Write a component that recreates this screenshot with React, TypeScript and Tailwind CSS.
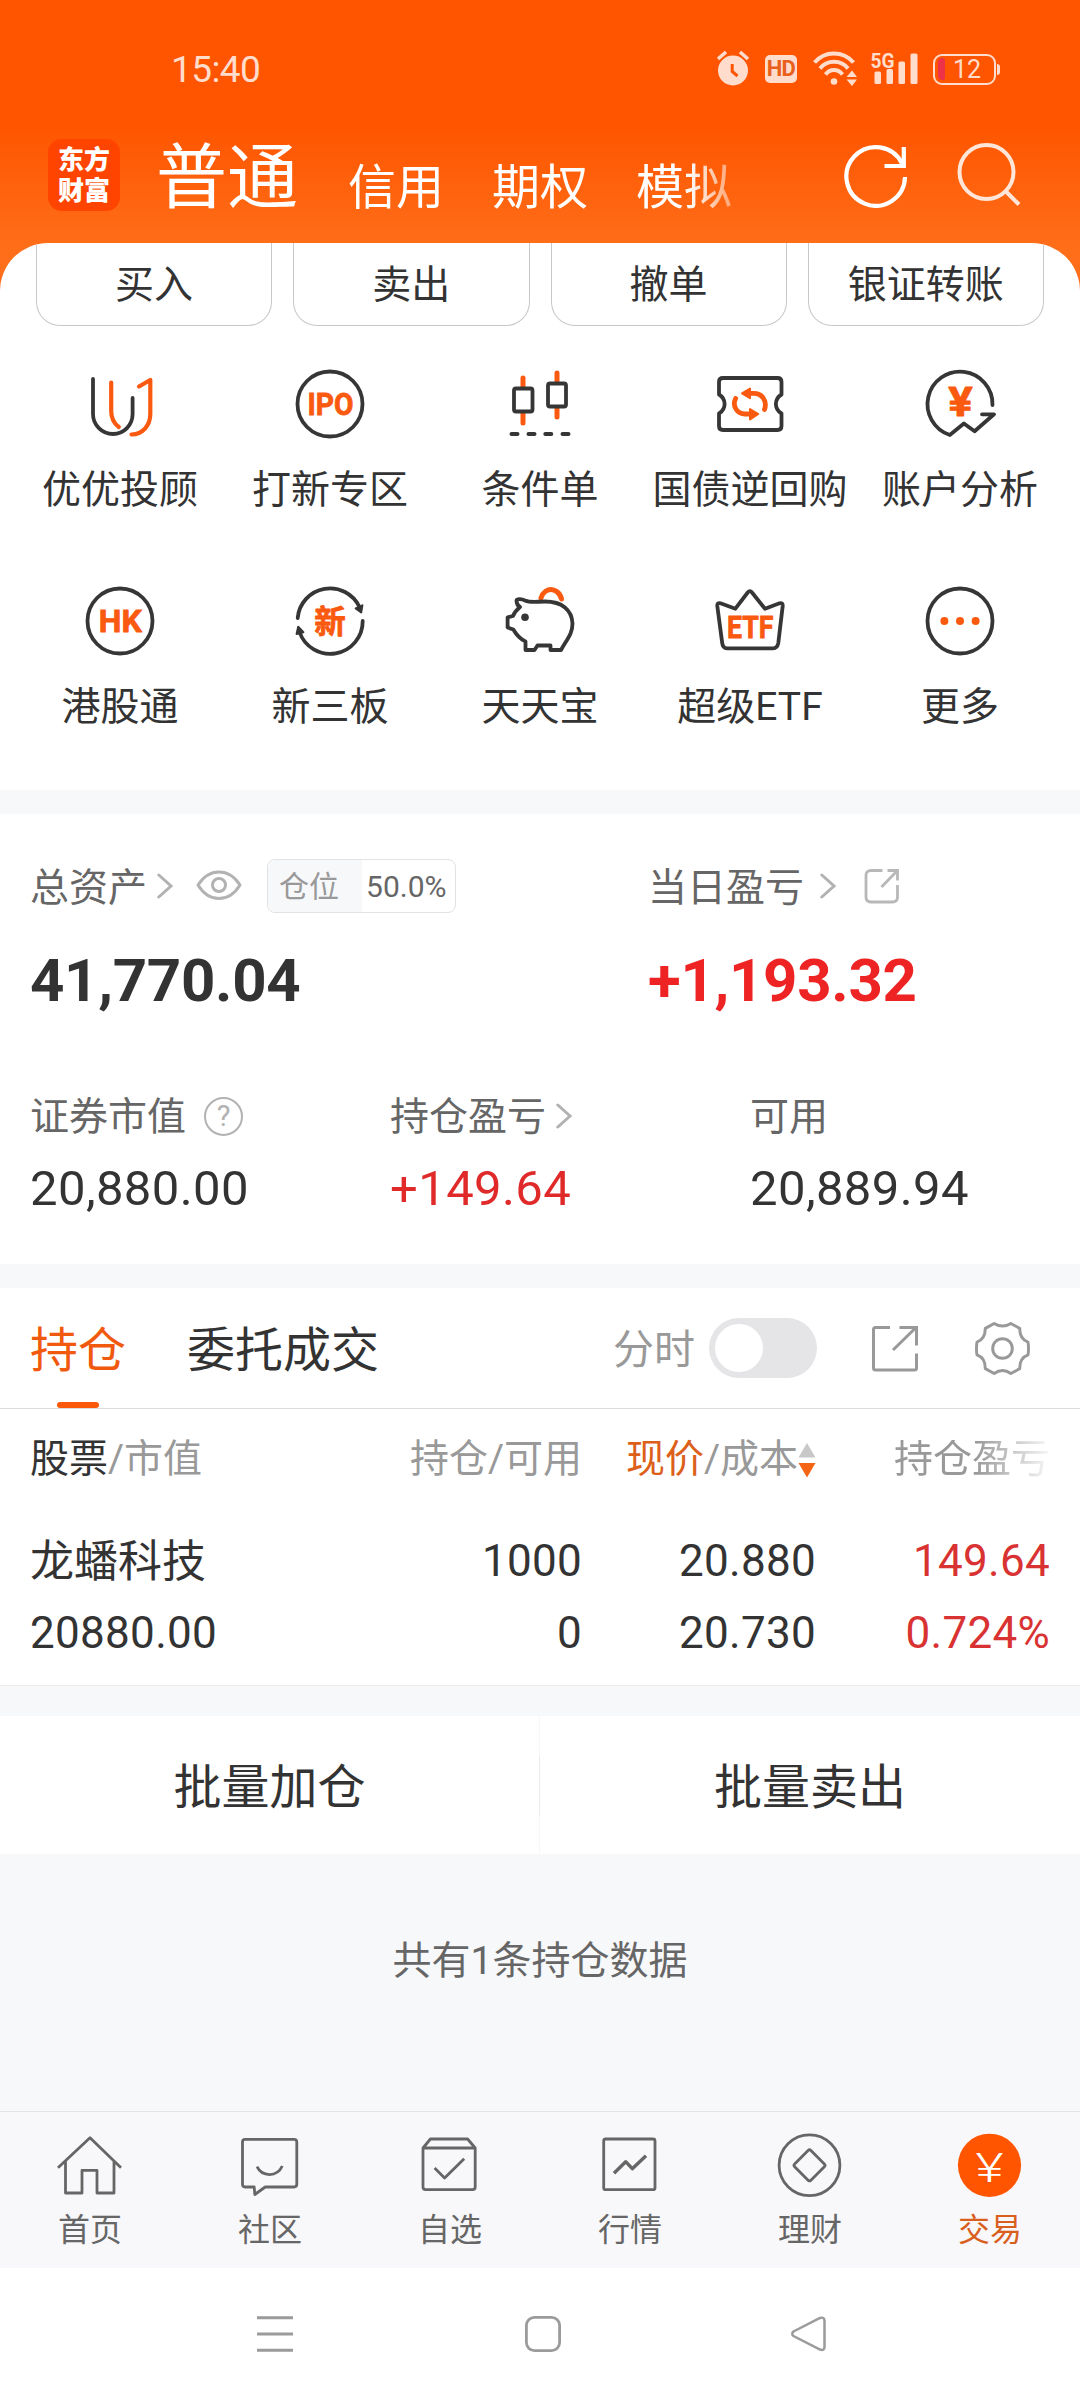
import type { ReactNode } from "react";

type IconProps = { children: ReactNode };

const DARK = "#363636";
const ORANGE = "#fa5a0f";

function ShortcutIcon({ children }: IconProps) {
  return (
    <svg
      className="h-20 w-20"
      viewBox="0 0 80 80"
      fill="none"
      stroke={DARK}
      strokeWidth="3.8"
      strokeLinecap="round"
      strokeLinejoin="round"
    >
      {children}
    </svg>
  );
}

function IconLabel({ text, x, y, width, size }: { text: string; x: number; y: number; width: number; size: number }) {
  return (
    <text
      x={x}
      y={y}
      fontSize={size}
      textLength={width}
      lengthAdjust="spacingAndGlyphs"
      fill={ORANGE}
      stroke={ORANGE}
      strokeWidth="0.8"
      className="font-['Roboto','Noto_Sans_CJK_SC',sans-serif] font-bold"
    >
      {text}
    </text>
  );
}

const shortcuts: { label: string; icon: ReactNode }[] = [
  {
    label: "优优投顾",
    icon: (
      <>
        <path d="M13 15V50C13 61 22 70 33 70S52.6 61 52.6 50V34" />
        <path d="M31.2 18.5V47C31.2 54 34 59.5 38.8 63" stroke={ORANGE} strokeWidth="4.2" />
        <path d="M59 22.5L70.3 16V50C70.3 61 63 70.3 51.5 70.5" stroke={ORANGE} strokeWidth="4.2" />
      </>
    ),
  },
  {
    label: "打新专区",
    icon: (
      <>
        <circle cx="40" cy="40" r="32.5" />
        <IconLabel text="IPO" x={17.5} y={51.3} width={46} size={31.5} />
      </>
    ),
  },
  {
    label: "条件单",
    icon: (
      <>
        <path d="M23 14V22M23 50V59M57 9V17M57 45V53" stroke={ORANGE} strokeWidth="5" />
        <rect x="14" y="24.5" width="18.5" height="23" rx="2" />
        <rect x="48" y="19.5" width="18" height="23" rx="2" />
        <path d="M11.5 70H17.5M28.5 70H34.5M45.3 70H51.3M62.5 70H68.5" strokeWidth="4" />
      </>
    ),
  },
  {
    label: "国债逆回购",
    icon: (
      <>
        <path d="M13 14H67.5Q71.5 14 71.5 18V30.5C64 35 64 45 71.5 49.5V62Q71.5 66 67.5 66H13Q9 66 9 62V49.5C16.5 45 16.5 35 9 30.5V18Q9 14 13 14Z" />
        <path d="M38 29.3H44C52 29.3 57.5 37 54.5 45.5M25.6 34.5C22 42 27 50 35 50H41" stroke={ORANGE} strokeWidth="4.8" />
        <path d="M32 29.3L40 24.5V34.2ZM48.3 50L40 45V55.5Z" fill={ORANGE} stroke={ORANGE} strokeWidth="2" />
      </>
    ),
  },
  {
    label: "账户分析",
    icon: (
      <>
        <path d="M72.5 41A32.5 32.5 0 1 0 29.8 71L43.9 59.5L54.6 67.3L74 50.3H62" />
        <IconLabel text="¥" x={28.2} y={52} width={24.5} size={41} />
      </>
    ),
  },
  {
    label: "港股通",
    icon: (
      <>
        <circle cx="40" cy="40" r="32.5" />
        <IconLabel text="HK" x={18.8} y={51.3} width={43} size={31.5} />
      </>
    ),
  },
  {
    label: "新三板",
    icon: (
      <>
        <path d="M7.7 37A32.5 32.5 0 0 1 69.5 26M72.7 40A32.5 32.5 0 0 1 9.5 51" />
        <path d="M72.4 24.3L65.7 27.5L71.2 31.5ZM8.2 45.7L6.6 53L13.4 51.2Z" fill={DARK} strokeWidth="2" />
        <IconLabel text="新" x={24.3} y={51.8} width={31.5} size={31.5} />
      </>
    ),
  },
  {
    label: "天天宝",
    icon: (
      <>
        <path d="M41 17C43 10.5 48 8.5 51 8.5S60 11 61.5 18" stroke={ORANGE} strokeWidth="5" />
        <path d="M16.5 19.5C17 17.5 22 18 25 19.5C31 22 37 20.5 45 20.5C62 20.5 72 29 72.5 42.5C72.5 53 67 58 61 69H50.5V64.5H37.5L34.5 69H25.5V60.5C19 57.5 16.5 54 13.3 48.5L7.6 46.5V36.3L13 35C14.5 31 16.5 29 20 26C17 24.5 16.5 22 16.5 19.5Z" />
        <circle cx="25" cy="36.3" r="3.8" fill={DARK} stroke="none" />
      </>
    ),
  },
  {
    label: "超级ETF",
    icon: (
      <>
        <path d="M25.4 27.7L37.7 11.5Q39.8 8.6 42 11.5L55 27.7L69.5 22.3Q73 21.5 72.7 25L68.3 62Q67.5 67.3 63 67.3H17Q12.8 67.3 12.2 62L7.3 25Q7 21.5 10.5 22.3Z" />
        <IconLabel text="ETF" x={17} y={57.3} width={46.5} size={31.5} />
      </>
    ),
  },
  {
    label: "更多",
    icon: (
      <>
        <circle cx="40" cy="40" r="32.5" />
        <g fill={ORANGE} stroke="none">
          <circle cx="24.4" cy="40" r="4" />
          <circle cx="40" cy="40" r="4" />
          <circle cx="55.6" cy="40" r="4" />
        </g>
      </>
    ),
  },
];

const navItems: { label: string; active?: boolean; icon: ReactNode }[] = [
  {
    label: "首页",
    icon: (
      <path d="M8 42.7L40 12.8L71 42.7M15.5 36V68H32V45.3H47V68H64V36" />
    ),
  },
  {
    label: "社区",
    icon: (
      <>
        <path d="M15 14.3H64Q66.8 14.3 66.8 17V59.3Q66.8 62 64 62H35.2L24.8 69.5L24.2 62H15Q12.5 62 12.5 59.3V17Q12.5 14.3 15 14.3Z" />
        <path d="M27 41.7C32 52 47 52.5 52.3 41" />
      </>
    ),
  },
  {
    label: "自选",
    icon: (
      <path d="M13 23L20.4 14H57.6L65.2 23V62Q65.2 64.7 62.5 64.7H15.7Q13 64.7 13 62ZM13 23H65.2M24.6 43L34.6 53L54.2 33.7" />
    ),
  },
  {
    label: "行情",
    icon: (
      <>
        <rect x="13.7" y="14" width="51.3" height="50.7" rx="2" />
        <path d="M24 48.3L35.7 36.7L42.3 43.7L56 30.7" strokeWidth="3.4" />
      </>
    ),
  },
  {
    label: "理财",
    icon: (
      <>
        <circle cx="39.5" cy="40.3" r="30.4" />
        <rect x="28" y="28.8" width="23" height="23" rx="2" transform="rotate(45 39.5 40.3)" />
      </>
    ),
  },
  {
    label: "交易",
    active: true,
    icon: (
      <>
        <circle cx="39.5" cy="40.3" r="31.6" fill="#ff5500" stroke="none" />
        <text
          x="25.5"
          y="56.5"
          fontSize="41"
          textLength="28"
          lengthAdjust="spacingAndGlyphs"
          fill="#fff"
          stroke="none"
          className="font-['Roboto',sans-serif] font-light"
        >
          ¥
        </text>
      </>
    ),
  },
];

const actions = ["买入", "卖出", "撤单", "银证转账"];

function Chevron() {
  return (
    <svg className="h-[26px] w-4" viewBox="0 0 16 26" fill="none" stroke="#b2b2b2" strokeWidth="3" strokeLinecap="round">
      <path d="M1.8 2L14 13L1.8 24" />
    </svg>
  );
}

function StatusIcons() {
  return (
    <div className="flex items-center text-[#ffdccb]">
      <svg className="h-9 w-8" viewBox="0 0 32 36" fill="currentColor">
        <circle cx="16" cy="19.5" r="15" />
        <path d="M1 8L9 1M31 8L23 1" stroke="currentColor" strokeWidth="3.5" />
        <path d="M15.2 13V20.5L20.5 25" stroke="#ff5500" strokeWidth="3" fill="none" />
      </svg>
      <div className="ml-4 flex h-7 w-8 items-center justify-center rounded-[5px] bg-[#ffdccb] text-[22px] leading-none font-bold tracking-tight text-[#e8601c]">
        HD
      </div>
      <svg className="ml-4 h-9 w-11" viewBox="0 0 44 36" fill="none" stroke="currentColor" strokeWidth="4">
        <path d="M1.5 11.5C12 -0.5 30 -0.5 40.5 11.5M7 17.5C14 8.5 28 8.5 35 17.5M12.5 23.5C17 17.5 25 17.5 29.5 23.5" />
        <circle cx="21" cy="30.5" r="3.3" fill="currentColor" stroke="none" />
        <path d="M33.5 26L39 19.5L44 26ZM33.5 28.5L39 35L44 28.5Z" fill="currentColor" stroke="none" />
      </svg>
      <svg className="ml-3 h-10 w-[50px]" viewBox="-2 -2 50 40" fill="currentColor">
        <text x="-0.5" y="16.5" fontSize="20" textLength="24" lengthAdjust="spacingAndGlyphs" className="font-['Roboto',sans-serif] font-bold">
          5G
        </text>
        <rect x="3.5" y="20.5" width="6.5" height="12.5" rx="1.5" />
        <rect x="15.5" y="18" width="6.5" height="15" rx="1.5" />
        <rect x="27.5" y="10.5" width="6.5" height="22.5" rx="1.5" />
        <rect x="39.5" y="2.5" width="7" height="30.5" rx="1.5" />
      </svg>
      <div className="ml-3.5 flex h-[31px] w-[63px] items-center rounded-[9px] border-[2.5px] border-current px-[3px]">
        <span className="h-[22px] w-[7px] rounded-l-[5px] rounded-r-[3px] bg-[#ee3248]" />
        <span className="ml-2 text-[25px] leading-none">12</span>
      </div>
      <span className="ml-px h-[11px] w-[3px] rounded-r bg-current" />
    </div>
  );
}

function Header() {
  return (
    <header className="h-[243px] text-white">
      <div className="flex h-[138px] items-center justify-between pr-20 pl-[171px]">
        <span className="text-[37px] leading-none tracking-[-0.6px] text-[#ffdccb]">15:40</span>
        <StatusIcons />
      </div>
      <div className="mt-px flex items-start">
        <div className="ml-12 flex h-[72px] w-[72px] flex-col items-center justify-center rounded-[14px] bg-[#ff4400] pt-0.5 text-[26px] leading-[31px] font-black">
          <span>东方</span>
          <span>财富</span>
        </div>
        <span className="ml-9 text-[71px] leading-[77px]">普通</span>
        <nav className="mt-[13px] ml-[50px] flex gap-12 text-[48px] leading-[72px] [mask-image:linear-gradient(to_right,#000_340px,transparent_415px)]">
          <span>信用</span>
          <span>期权</span>
          <span>模拟</span>
        </nav>
        <svg className="mt-[3px] ml-[111px] h-[66px] w-[66px]" viewBox="0 0 66 66" fill="none" stroke="#fff" strokeWidth="4.2">
          <path d="M62 35A29.3 29.3 0 1 1 59 21.5" />
          <path d="M60.8 5V24H41.5" />
        </svg>
        <svg className="mt-1 ml-[46px] h-[68px] w-[66px]" viewBox="0 0 66 68" fill="none" stroke="#ffe6d8" strokeWidth="4">
          <circle cx="31.5" cy="29" r="27" />
          <path d="M50 47.5L64 61.5" />
        </svg>
      </div>
    </header>
  );
}

function Shortcuts() {
  return (
    <section className="h-[547px] shrink-0 overflow-hidden rounded-t-[48px] bg-white">
      <div className="flex gap-[21px] px-9">
        {actions.map((label) => (
          <button
            key={label}
            className="h-[83px] flex-1 rounded-b-3xl border-x border-b border-[#c8c8c8] pt-0.5 text-[39px] leading-none"
          >
            {label}
          </button>
        ))}
      </div>
      <div className="mt-[38px] grid grid-cols-5 gap-y-[67px] px-[15px]">
        {shortcuts.map((item) => (
          <div key={item.label} className="flex flex-col items-center">
            <ShortcutIcon>{item.icon}</ShortcutIcon>
            <span className="mt-[23px] text-[39px] leading-[47px] whitespace-nowrap">{item.label}</span>
          </div>
        ))}
      </div>
    </section>
  );
}

function Summary() {
  return (
    <section className="mt-6 h-[450px] shrink-0 bg-white px-[30px] pt-[45px]">
      <div className="grid grid-cols-[618px_1fr]">
        <div>
          <div className="flex h-[54px] items-center text-[39px] leading-none text-[#666]">
            <span className="pt-1">总资产</span>
            <span className="ml-2.5">
              <Chevron />
            </span>
            <svg className="ml-[23px] h-8 w-[46px]" viewBox="0 0 46 32" fill="none" stroke="#b2b2b2" strokeWidth="3">
              <path d="M2 15C13 -2.5 33 -2.5 44 15C33 33 13 33 2 15Z" strokeLinejoin="round" />
              <circle cx="23" cy="15" r="6.5" />
            </svg>
            <div className="ml-[25px] flex h-[54px] items-stretch overflow-hidden rounded-lg border border-[#e2e2e2] text-[30px]">
              <span className="flex w-[94px] items-center bg-[#f7f8fa] pt-px pl-[11px] text-[#999]">仓位</span>
              <span className="flex w-[93px] items-center pt-px pl-1">50.0%</span>
            </div>
          </div>
          <div className="mt-[37px] text-[60px] leading-[62px] font-bold tracking-[-0.3px]">41,770.04</div>
        </div>
        <div>
          <div className="flex h-[54px] items-center text-[39px] leading-none text-[#666]">
            <span className="pt-1">当日盈亏</span>
            <span className="ml-4">
              <Chevron />
            </span>
            <svg className="ml-7 h-9 w-9" viewBox="0 0 36 36" fill="none" stroke="#b8b8b8" strokeWidth="2.8">
              <path d="M18.5 2.5H7Q2 2.5 2 7.5V29Q2 34 7 34H28.5Q33.5 34 33.5 29V17M17.5 19L33 3M23.5 2.5H33.5V12.5" />
            </svg>
          </div>
          <div className="mt-[37px] text-[60px] leading-[62px] font-bold tracking-[-0.3px] text-[#ee2424]">+1,193.32</div>
        </div>
      </div>
      <div className="mt-[77px] grid grid-cols-[360px_360px_1fr] text-[49px] leading-[52px] tracking-[0.4px]">
        <div>
          <div className="mb-5 flex h-[54px] items-center text-[39px] tracking-normal text-[#666]">
            <span className="pt-0.5">证券市值</span>
            <span className="ml-[18px] flex h-[39px] w-[39px] items-center justify-center rounded-full border-[2.5px] border-[#b2b2b2] text-[29px] leading-none text-[#b2b2b2]">
              ?
            </span>
          </div>
          20,880.00
        </div>
        <div>
          <div className="mb-5 flex h-[54px] items-center text-[39px] tracking-normal text-[#666]">
            <span className="pt-0.5">持仓盈亏</span>
            <span className="ml-2.5">
              <Chevron />
            </span>
          </div>
          <span className="text-[#e02a2a]">+149.64</span>
        </div>
        <div>
          <div className="mb-5 flex h-[54px] items-center pt-0.5 text-[39px] tracking-normal text-[#666]">可用</div>
          20,889.94
        </div>
      </div>
    </section>
  );
}

function Positions() {
  return (
    <section className="mt-6 h-[398px] shrink-0 border-b border-[#ececec] bg-white">
      <div className="flex h-[121px] items-center border-b border-[#dcdcdc] pr-[50px] pl-[30px] text-[48px] leading-none">
        <div className="relative flex h-full items-center pt-[5px] text-[#f0590e]">
          持仓
          <span className="absolute bottom-0 left-[27px] h-1.5 w-[42px] rounded-full bg-[#fa5a0a]" />
        </div>
        <span className="ml-[61px] pt-[5px]">委托成交</span>
        <span className="ml-auto pt-1 text-[41px] text-[#999]">分时</span>
        <span className="ml-3.5 flex h-[60px] w-[108px] items-center rounded-full bg-[#e5e5e7] pl-1.5">
          <span className="h-12 w-12 rounded-full bg-white" />
        </span>
        <svg className="ml-[54px] h-12 w-12" viewBox="0 0 48 48" fill="none" stroke="#999" strokeWidth="3">
          <path d="M19 3.5H4.5Q2.5 3.5 2.5 5.5V44Q2.5 46 4.5 46H43.5Q45.5 46 45.5 44V29.5M22 26L44.5 4M28.5 3.5H45.5V21.5" />
        </svg>
        <svg className="ml-14 h-[55px] w-[55px]" viewBox="0 0 56 56" fill="none" stroke="#999" strokeWidth="3" strokeLinejoin="round">
          <path d="M19.5 2.5C25 6 31 6 36.5 2.5L45.5 7.5C45.5 15 48 19.5 54 21.5Q55 28 54 34.5C48 36.5 45.5 41 45.5 48.5L36.5 53.5C31 49.5 25 49.5 19.5 53.5L10.5 48.5C10.5 41 8 36.5 2 34.5Q1 28 2 21.5C8 19.5 10.5 15 10.5 7.5Z" />
          <circle cx="28" cy="28" r="10" />
        </svg>
      </div>
      <div className="grid h-[101px] grid-cols-[350px_202px_234px_234px] items-center pl-[30px] text-[39px] leading-none text-[#999]">
        <div>
          <span className="text-[#333]">股票</span>/市值
        </div>
        <div className="text-right">持仓/可用</div>
        <div className="flex items-center justify-end">
          <span className="text-[#dc5f1a]">现价</span>/成本
          <svg className="h-9 w-[18px]" viewBox="0 0 18 36">
            <path d="M9 1L17.5 15.5H0.5Z" fill="#c8c8c8" />
            <path d="M0.5 21H17.5L9 35.5Z" fill="#f56414" />
          </svg>
        </div>
        <div className="text-right [mask-image:linear-gradient(to_right,#000_160px,transparent_240px)]">持仓盈亏</div>
      </div>
      <div className="grid grid-cols-[350px_202px_234px_234px] pt-[15px] pl-[30px] text-right text-[44px] leading-[72px] tracking-[0.3px]">
        <div className="pt-px text-left tracking-normal">龙蟠科技</div>
        <div>1000</div>
        <div>20.880</div>
        <div className="text-[#d93232]">149.64</div>
        <div className="-mt-px text-left">20880.00</div>
        <div className="-mt-px">0</div>
        <div className="-mt-px">20.730</div>
        <div className="-mt-px text-[#d93232]">0.724%</div>
      </div>
    </section>
  );
}

export default function App() {
  return (
    <div className="flex h-[2400px] w-[1080px] flex-col overflow-hidden bg-[#f7f8fa] font-['Roboto','Noto_Sans_CJK_SC',sans-serif] text-[#333]">
      <div className="bg-[linear-gradient(#ff5500_125px,#ff6d18_243px,#ff701c_300px)]">
        <Header />
        <Shortcuts />
      </div>
      <Summary />
      <Positions />
      <div className="mt-[30px] flex h-[138px] shrink-0 items-center bg-white text-[48px] leading-none">
        <button className="w-[539px] pt-[5px]">批量加仓</button>
        <span className="h-full w-px bg-[linear-gradient(#f7f7f7_39px,#ebebeb_39px_99px,#f7f7f7_99px)]" />
        <button className="flex-1 pt-[5px]">批量卖出</button>
      </div>
      <p className="mt-[82px] text-center text-[39px] leading-[50px] text-[#666]">共有1条持仓数据</p>
      <nav className="mt-auto grid h-[157px] shrink-0 grid-cols-6 border-t border-[#e4e4e6] bg-[#f8f8fa]">
        {navItems.map((item) => (
          <div key={item.label} className="flex flex-col items-center pt-[13px]">
            <svg
              className="h-20 w-20"
              viewBox="0 0 80 80"
              fill="none"
              stroke="#666"
              strokeWidth="2.8"
              strokeLinejoin="round"
            >
              {item.icon}
            </svg>
            <span className={item.active ? "mt-[5px] text-[32px] leading-10 text-[#d95f1e]" : "mt-[5px] text-[32px] leading-10 text-[#666]"}>
              {item.label}
            </span>
          </div>
        ))}
      </nav>
      <div className="flex h-[132px] shrink-0 items-center bg-white pl-[257px]">
        <svg className="h-9 w-9" viewBox="0 0 36 36" stroke="#9b9b9b" strokeWidth="3">
          <path d="M0 1.8H36M0 18H36M0 34.2H36" />
        </svg>
        <svg className="ml-[232px] h-9 w-9" viewBox="0 0 36 36" fill="none" stroke="#9b9b9b" strokeWidth="2.8">
          <rect x="1.4" y="1.4" width="33.2" height="33.2" rx="8" />
        </svg>
        <svg className="ml-[230px] h-9 w-9" viewBox="0 0 36 36" fill="none" stroke="#9b9b9b" strokeWidth="2.5">
          <path d="M2.5 15.5L29 2Q33.5 0.5 33.5 5V31Q33.5 35 29 33.5L2.5 20Q0 18 2.5 15.5Z" />
        </svg>
      </div>
    </div>
  );
}
